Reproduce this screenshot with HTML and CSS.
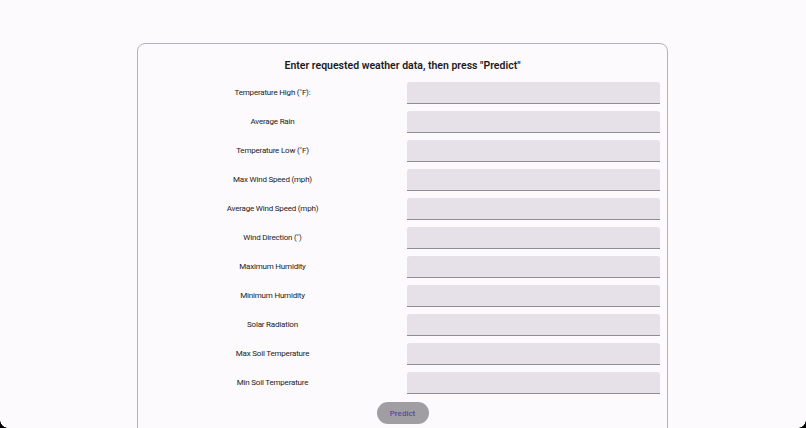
FILE: index.html
```html
<!DOCTYPE html>
<html>
<head>
<meta charset="utf-8">
<link rel="stylesheet" href="styles.css">
</head>
<body>
<div class="card">
  <h1 class="title">Enter requested weather data, then press "Predict"</h1>
  <form class="form">
    <label class="label">Temperature High (˚F):</label><input class="field" type="text">
    <label class="label">Average Rain</label><input class="field" type="text">
    <label class="label">Temperature Low (˚F)</label><input class="field" type="text">
    <label class="label">Max Wind Speed (mph)</label><input class="field" type="text">
    <label class="label">Average Wind Speed (mph)</label><input class="field" type="text">
    <label class="label">Wind Direction (˚)</label><input class="field" type="text">
    <label class="label">Maximum Humidity</label><input class="field" type="text">
    <label class="label">Minimum Humidity</label><input class="field" type="text">
    <label class="label">Solar Radiation</label><input class="field" type="text">
    <label class="label">Max Soil Temperature</label><input class="field" type="text">
    <label class="label">Min Soil Temperature</label><input class="field" type="text">
  </form>
  <div class="actions"><button class="btn" type="button">Predict</button></div>
</div>
<div class="corner corner-left"></div>
<div class="corner corner-right"></div>
</body>
</html>
```
FILE: styles.css
```css
html, body {
  margin: 0;
  padding: 0;
  background: #fcfafd;
  height: 100%;
  overflow: hidden;
}
body {
  font-family: Roboto, "Liberation Sans", sans-serif;
  color: #1d1b20;
  padding-top: 43px;
  box-sizing: border-box;
}
.card {
  margin-left: 137px;
  width: 531px;
  box-sizing: border-box;
  border: 1px solid #b4b2b6;
  border-radius: 8px;
  padding: 13px 7px 0 0;
  height: 400px;
}
.title {
  margin: 0 0 7px 0;
  text-align: center;
  font-size: 10.5px;
  line-height: 18px;
  font-weight: 600;
  padding-left: 7px;
}
.form {
  display: grid;
  grid-template-columns: 1fr 253px;
  row-gap: 7px;
  align-items: center;
}
.label {
  text-align: center;
  font-size: 8px;
  letter-spacing: -0.2px;
  line-height: 22px;
  color: #1d1b20;
}
.field {
  height: 22px;
  box-sizing: border-box;
  margin: 0;
  border: none;
  border-bottom: 1px solid #8f8c94;
  border-radius: 3px 3px 0 0;
  background: #e6e1e9;
  padding: 0 8px;
  outline: none;
}
.actions {
  display: flex;
  justify-content: center;
  margin-top: 8px;
  padding-left: 7px;
}
.btn {
  width: 52px;
  height: 22px;
  border: none;
  border-radius: 11px;
  background: #a09ea3;
  color: #5a48a0;
  font-family: Roboto, "Liberation Sans", sans-serif;
  font-size: 8px;
  font-weight: 500;
  padding: 0;
}
.corner {
  position: fixed;
  bottom: 0;
  width: 8px;
  height: 8px;
}
.corner-left {
  left: 0;
  background: radial-gradient(circle at 100% 0, transparent 7.5px, #000 8px);
}
.corner-right {
  right: 0;
  background: radial-gradient(circle at 0 0, transparent 7.5px, #000 8px);
}
```
